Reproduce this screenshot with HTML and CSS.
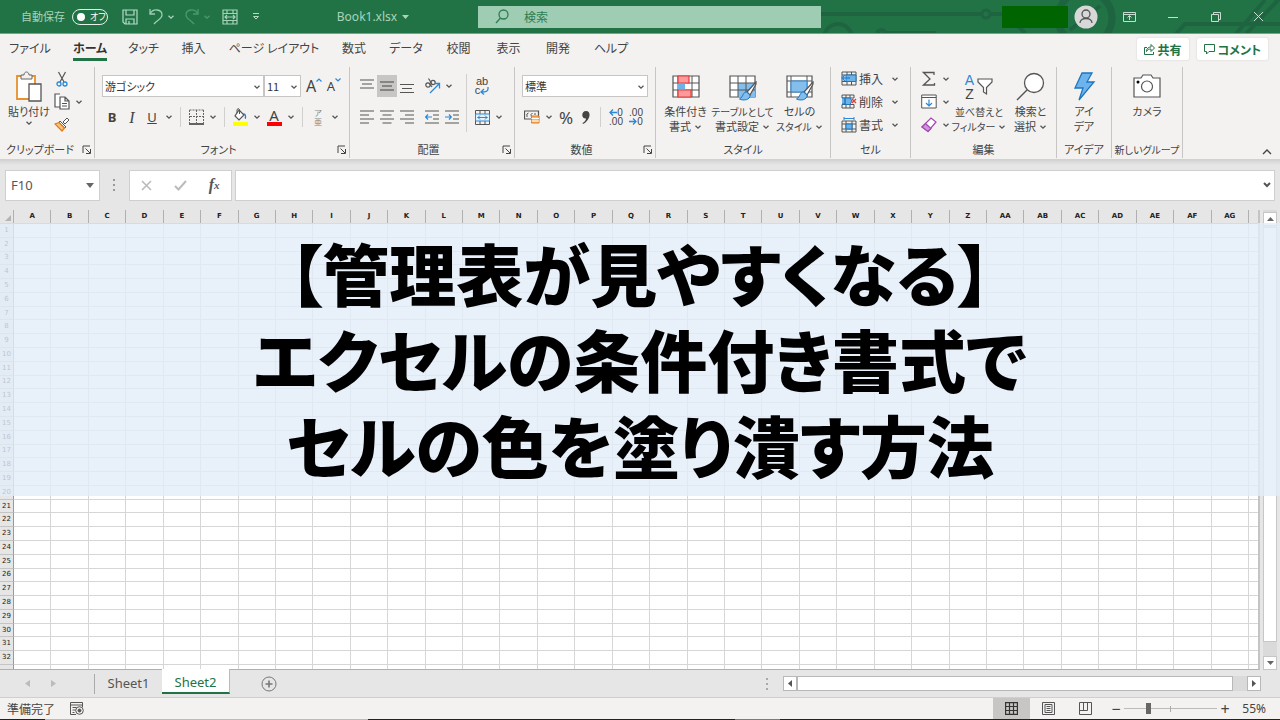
FILE: index.html
```html
<!DOCTYPE html>
<html lang="ja">
<head>
<meta charset="utf-8">
<title>Book1.xlsx</title>
<link rel="stylesheet" href="styles.css">
</head>
<body>
<svg class="defs" aria-hidden="true">
  <symbol id="cv" viewBox="0 0 8 8"><path d="M1.5 2.7 4 5.2 6.500 2.700" fill="none" stroke="currentColor" stroke-width="1.300"/></symbol>
  <symbol id="launch" viewBox="0 0 10 10"><path d="M1 8V1h7M3.500 3.500 8 8M8.500 4v4.500H4" fill="none" stroke="currentColor"/></symbol>
  <symbol id="brushpen" viewBox="0 0 18 20"><path d="M17 1 8 11l3 3 6-11z" fill="#fff" stroke="#555" stroke-width="1.200"/><path d="M7.500 11c-4 0-3 5-7 7 4 2 11 1 10.500-4z" fill="#83beec" stroke="#1e76bd"/></symbol>
</svg>
<div class="app">
  <header class="titlebar">
    <svg class="deco" viewBox="0 0 460 33" aria-hidden="true"><g fill="none" stroke="#1e6440" stroke-width="4"><path d="M0 14h162M171 14h20"/><circle cx="166" cy="14" r="4" stroke-width="3"/><circle cx="18" cy="38" r="14"/><path d="M57 33a5 5 0 0 1 9 0h50"/><circle cx="265" cy="18" r="27" stroke-width="7"/><path d="M205 33 192 20M250 30l30-24M355 35l10-11h95M415 35 445 0M425 35 460-2"/></g></svg>
    <label class="autosave">自動保存 <input type="checkbox" class="switch-input"><span class="switch">オフ</span></label>
    <div class="quick">
      <button class="q20" aria-label="上書き保存"><svg width="16" height="16" viewBox="0 0 16 16" fill="none" stroke="#b4dcc5" stroke-width="1.200"><path d="M1 1h14v14H3l-2-2zM4 1v5h8V1M4 15v-5h8v5M7 15v-3"/></svg></button>
      <button class="q26" aria-label="元に戻す"><svg width="14" height="17" viewBox="0 0 14 17" fill="none" stroke="#9ccdb1" stroke-width="1.300"><path d="M1 1v5h5M1 6C4 0 13 1 13 7c0 4-5 5-8 9"/></svg><svg class="cv"><use href="#cv"/></svg></button>
      <button class="q26 dim" aria-label="やり直し"><svg width="14" height="17" viewBox="0 0 14 17" fill="none" stroke="#4c9870" stroke-width="1.300"><path d="M13 1v5H8M13 6C10 0 1 1 1 7c0 4 5 5 8 9"/></svg><svg class="cv"><use href="#cv"/></svg></button>
      <button class="q20" aria-label="セルを結合して中央揃え"><svg width="16" height="16" viewBox="0 0 16 16" fill="none" stroke="#a5d3b8" stroke-width="1.200"><path d="M1 1h14v14H1zM1 4.500h14M1 11.500h14M5 1v3M11 1v3M5 12v3M11 12v3M3 8h10M5 6 3 8l2 2M11 6l2 2-2 2"/></svg></button>
      <button class="more" aria-label="カスタマイズ"><svg width="8" height="7" viewBox="0 0 8 7" fill="none" stroke="#b4dcc5"><path d="M1 .5h6M1.500 3.500h5L4 6z"/></svg></button>
    </div>
    <button class="docname">Book1.xlsx <svg width="7" height="4" viewBox="0 0 7 4"><path d="M0 0h7L3.500 4z" fill="#a9d3bb"/></svg></button>
    <label class="search"><svg width="14" height="15" viewBox="0 0 14 15" fill="none" stroke="#2d7d52" stroke-width="1.300"><circle cx="8.500" cy="5.500" r="4.500"/><path d="M5.500 9 1 14"/></svg><input type="search" placeholder="検索" aria-label="検索"></label>
    <div class="account"><span class="mask"></span>
      <svg width="24" height="24" viewBox="0 0 24 24"><circle cx="12" cy="12" r="11.500" fill="#d8d8d8"/><g fill="none" stroke="#555" stroke-width="1.300"><circle cx="12" cy="9" r="4"/><path d="M6 18c0-6 12-6 12 0"/></g></svg></div>
    <div class="winbtns">
      <button aria-label="リボンの表示オプション"><svg width="13" height="10" viewBox="0 0 13 10" fill="none" stroke="#c5dfd0"><path d="M.5.5h12v9H.5zM.5 2.500h12M6.500 8V4M4.500 5.500l2-2 2 2"/></svg></button>
      <button aria-label="最小化"><svg width="10" height="10" viewBox="0 0 10 10" stroke="#c5dfd0"><path d="M0 5.500h10"/></svg></button>
      <button aria-label="元のサイズに戻す"><svg width="10" height="10" viewBox="0 0 10 10" fill="none" stroke="#c5dfd0"><path d="M.5 2.500h7v7h-7zM2.500 2.500v-2h7v7h-2"/></svg></button>
      <button aria-label="閉じる"><svg width="11" height="11" viewBox="0 0 11 11" stroke="#c5dfd0"><path d="m1 1 9 9M10 1l-9 9"/></svg></button>
    </div>
  </header>

  <div class="tabrow">
    <nav class="tabs">
      <a href="#">ファイル</a><a href="#" class="active">ホーム</a><a href="#">タッチ</a><a href="#">挿入</a><a href="#">ページ レイアウト</a><a href="#">数式</a><a href="#">データ</a><a href="#">校閲</a><a href="#">表示</a><a href="#">開発</a><a href="#">ヘルプ</a>
    </nav>
    <div class="share">
      <button><svg width="11" height="12" viewBox="0 0 11 12" fill="none" stroke="#217346"><path d="M3 4.500H.5v7h9V9M2.500 8.500c0-3 2-4.500 4.500-4.500V1.500L10.500 5 7 8.500V6C5 6 3.500 6.500 2.500 8.500z"/></svg>共有</button>
      <button><svg width="11" height="11" viewBox="0 0 11 11" fill="none" stroke="#217346"><path d="M.5.500h10v7H5l-2.500 2.500V7.500h-2z"/></svg>コメント</button>
    </div>
  </div>

  <section class="ribbon">
    <div class="group g-clip">
      <div class="body">
        <button class="big paste"><svg width="28" height="32" viewBox="0 0 28 32" fill="none"><path d="M2 5h18v23H2z" fill="#fff" stroke="#e8912d" stroke-width="1.800"/><path d="M6 8V4h3c0-4 5-4 5 0h3v4z" fill="#f3f2f1" stroke="#666"/><path d="M14 13h12v17H14z" fill="#fff" stroke="#555" stroke-width="1.300"/></svg><span>貼り付け</span><svg class="cv"><use href="#cv"/></svg></button>
        <div class="stack">
          <button class="ic" aria-label="切り取り"><svg width="12" height="16" viewBox="0 0 12 16" fill="none"><path d="M2.500 1 8 11M9.500 1 4 11" stroke="#555" stroke-width="1.200"/><circle cx="3" cy="13" r="2" stroke="#2b88d8" stroke-width="1.300"/><circle cx="9" cy="13" r="2" stroke="#2b88d8" stroke-width="1.300"/></svg></button>
          <div class="row"><button class="ic" aria-label="コピー"><svg width="16" height="17" viewBox="0 0 16 17" fill="#fff" stroke="#555" stroke-width="1.200"><path d="M6 1H1v13h5M6 4h5l4 4v8H6zM11 4v4h4M8 10.500h5M8 13h5"/></svg></button><button class="cvb" aria-label="コピーのオプション"><svg class="cv"><use href="#cv"/></svg></button></div>
          <button class="ic" aria-label="書式のコピー"><svg width="16" height="15" viewBox="0 0 16 15"><path d="m9 5 4-4 2 2-4 4z" fill="#fff" stroke="#555"/><path d="m6 4 6 6-1.500 1L5 5.500z" fill="#fff" stroke="#555"/><path d="M5 5.500 1 7l7 7 2.500-3z" fill="#f7c37c" stroke="#e07b1a" stroke-width="1.200"/></svg></button>
        </div>
      </div>
      <div class="caption"><span>クリップボード</span><button aria-label="詳細"><svg width="10" height="10"><use href="#launch"/></svg></button></div>
    </div>

    <div class="group g-font">
      <div class="rows">
        <div class="row">
          <label class="combo font-name"><select aria-label="フォント"><option>游ゴシック</option></select><svg class="cv"><use href="#cv"/></svg></label>
          <label class="combo font-size"><select aria-label="フォント サイズ"><option>11</option></select><svg class="cv"><use href="#cv"/></svg></label>
          <button class="ic lat a-big" aria-label="拡大">A<svg width="6" height="4" viewBox="0 0 6 4"><path d="M.5 3.500 3 1l2.500 2.500" fill="none" stroke="#2b88d8" stroke-width="1.200"/></svg></button>
          <button class="ic lat" aria-label="縮小">A<svg width="6" height="4" viewBox="0 0 6 4"><path d="M.5.500 3 3 5.500.500" fill="none" stroke="#2b88d8" stroke-width="1.200"/></svg></button>
        </div>
        <div class="row">
          <button class="ic lat"><b>B</b></button><button class="ic serif"><i>I</i></button><button class="ic lat"><u>U</u></button><button class="cvb" aria-label="下線"><svg class="cv"><use href="#cv"/></svg></button><span class="sep"></span>
          <button class="ic" aria-label="罫線"><svg width="15" height="16" viewBox="0 0 15 16" fill="none" stroke="#666"><path d="M.5 1h14M.5 1v13M14.500 1v13M7.500 1v13M1 7.500h13" stroke-dasharray="2 1"/><path d="M0 15h15" stroke="#333" stroke-width="1.500"/></svg></button><button class="cvb" aria-label="罫線の種類"><svg class="cv"><use href="#cv"/></svg></button><span class="sep"></span>
          <button class="ic" aria-label="塗りつぶし"><svg width="16" height="18" viewBox="0 0 16 18"><path d="m7 2 5 5-5 5-4-4z" fill="#fff" stroke="#555" stroke-width="1.200"/><path d="M5 5V1.500q1.500-2 2.500 0V6" fill="none" stroke="#555"/><path d="M11 5q4 0 3 6-2 0-1-3z" fill="#2b7cc4"/><path d="M1 14h15v4H1z" fill="#ff0"/></svg></button><button class="cvb" aria-label="塗りつぶしの色"><svg class="cv"><use href="#cv"/></svg></button>
          <button class="ic fontcolor lat" aria-label="フォントの色">A</button><button class="cvb" aria-label="フォントの色の選択"><svg class="cv"><use href="#cv"/></svg></button><span class="sep"></span>
          <button class="ic ruby"><span>ア</span><span>亜</span></button><button class="cvb" aria-label="ふりがな"><svg class="cv"><use href="#cv"/></svg></button>
        </div>
      </div>
      <div class="caption"><span>フォント</span><button aria-label="詳細"><svg width="10" height="10"><use href="#launch"/></svg></button></div>
    </div>

    <div class="group g-align">
      <div class="body">
        <div class="rows">
          <div class="row">
            <button class="ic" aria-label="上揃え"><svg width="14" height="16" viewBox="0 0 14 16" stroke="#555" stroke-width="1.200"><path d="M0 2h14M2 6h10M0 10h14"/></svg></button>
            <button class="ic on" aria-label="上下中央揃え"><svg width="14" height="16" viewBox="0 0 14 16" stroke="#444" stroke-width="1.200"><path d="M0 4h14M2 8h10M0 12h14"/></svg></button>
            <button class="ic" aria-label="下揃え"><svg width="14" height="16" viewBox="0 0 14 16" stroke="#555" stroke-width="1.200"><path d="M0 6.500h14M2 10.500h10M0 14.500h14"/></svg></button>
            <span class="gap"></span>
            <button class="ic" aria-label="方向"><svg width="17" height="17" viewBox="0 0 17 17" fill="none"><g stroke="#555" stroke-width="1.200"><circle cx="4" cy="7" r="2.200"/><path d="m5 5 3 4"/><circle cx="9" cy="4.500" r="2.200"/><path d="M4.500.500 8 6"/></g><path d="M6 15 15 6M10.500 5.500h5v5" stroke="#2b88d8" stroke-width="1.300"/></svg></button><button class="cvb" aria-label="方向の選択"><svg class="cv"><use href="#cv"/></svg></button>
          </div>
          <div class="row">
            <button class="ic" aria-label="左揃え"><svg width="14" height="14" viewBox="0 0 14 14" stroke="#555" stroke-width="1.200"><path d="M0 1h14M0 5h9M0 9h14M0 13h9"/></svg></button>
            <button class="ic" aria-label="中央揃え"><svg width="14" height="14" viewBox="0 0 14 14" stroke="#555" stroke-width="1.200"><path d="M0 1h14M2.500 5h9M0 9h14M2.500 13h9"/></svg></button>
            <button class="ic" aria-label="右揃え"><svg width="14" height="14" viewBox="0 0 14 14" stroke="#555" stroke-width="1.200"><path d="M0 1h14M5 5h9M0 9h14M5 13h9"/></svg></button>
            <span class="gap"></span>
            <button class="ic" aria-label="インデントを減らす"><svg width="14" height="14" viewBox="0 0 14 14" fill="none" stroke="#555" stroke-width="1.200"><path d="M0 1h14M8 5h6M8 9h6M0 13h14"/><path d="M7 7H1M3 4.500.700 7 3 9.500" stroke="#2b88d8"/></svg></button>
            <button class="ic" aria-label="インデントを増やす"><svg width="14" height="14" viewBox="0 0 14 14" fill="none" stroke="#555" stroke-width="1.200"><path d="M0 1h14M8 5h6M8 9h6M0 13h14"/><path d="M0 7h6M4 4.500 6.300 7 4 9.500" stroke="#2b88d8"/></svg></button>
          </div>
        </div>
        <span class="sep tall"></span>
        <div class="rows">
          <div class="row"><button class="ic wrap" aria-label="折り返して全体を表示する"><span>ab</span><span>c<svg width="9" height="8" viewBox="0 0 9 8" fill="none" stroke="#2b88d8" stroke-width="1.300"><path d="M8 0v2q0 3-6 3M4 2 1 5l3 2.500"/></svg></span></button></div>
          <div class="row"><button class="ic" aria-label="セルを結合"><svg width="15" height="15" viewBox="0 0 15 15" fill="none" stroke="#555"><path d="M.5.500h14v14H.5zM5 .5V4M10 .5V4M5 11v3.500M10 11v3.500"/><path d="M.5 4h14v7H.5z" fill="#e6f2fb" stroke="#2b88d8"/><path d="M2.500 7.500h10M5 5.500l-2 2 2 2M10 5.500l2 2-2 2" stroke="#2b88d8"/></svg></button><button class="cvb" aria-label="結合の選択"><svg class="cv"><use href="#cv"/></svg></button></div>
        </div>
      </div>
      <div class="caption"><span>配置</span><button aria-label="詳細"><svg width="10" height="10"><use href="#launch"/></svg></button></div>
    </div>

    <div class="group g-num">
      <div class="rows">
        <div class="row"><label class="combo num-format"><select aria-label="表示形式"><option>標準</option></select><svg class="cv"><use href="#cv"/></svg></label></div>
        <div class="row">
          <button class="ic" aria-label="通貨表示形式"><svg width="16" height="14" viewBox="0 0 16 14" fill="none"><path d="M.5 1h14v8H.5z" stroke="#555" stroke-width="1.200"/><path d="M4.500 3Q2 3 3 7M8.500 3Q6 4 7.500 7M11 3v2" stroke="#555"/><path d="M7.500 6h7.500v7H7.500z" fill="#f9b66b" stroke="#e07b1a"/><path d="M7.500 8.500H15M7.500 11H15" stroke="#fff"/></svg></button><button class="cvb" aria-label="通貨の選択"><svg class="cv"><use href="#cv"/></svg></button>
          <button class="ic lat pct">%</button>
          <button class="ic" aria-label="桁区切り"><svg width="8" height="13" viewBox="0 0 8 13"><path d="M4 0c6 0 4 10-3 13l-.5-1C3 10.500 4 9 4 7.500-1 8-1 0 4 0z" fill="#444"/></svg></button><span class="sep"></span>
          <button class="ic dec" aria-label="小数点以下の表示桁数を増やす"><span><svg width="8" height="7" viewBox="0 0 8 7" fill="none" stroke="#2b88d8" stroke-width="1.300"><path d="M8 3.500H1M4 .5l-3 3 3 3"/></svg>0</span><span>.00</span></button>
          <button class="ic dec" aria-label="小数点以下の表示桁数を減らす"><span>.00</span><span><svg width="8" height="7" viewBox="0 0 8 7" fill="none" stroke="#2b88d8" stroke-width="1.300"><path d="M0 3.500h7M4 .5l3 3-3 3"/></svg>0</span></button>
        </div>
      </div>
      <div class="caption"><span>数値</span><button aria-label="詳細"><svg width="10" height="10"><use href="#launch"/></svg></button></div>
    </div>

    <div class="group g-style">
      <div class="body">
        <button class="big"><svg width="30" height="28" viewBox="0 0 30 28"><path d="M2 3h26v21H2z" fill="#fff" stroke="#555" stroke-width="1.200"/><path d="M2 10h26M2 17h26M7 3v21M21 3v21" stroke="#555"/><path d="M7 3h11v7H7zM7 17h13v7H7z" fill="#ff9a9a" stroke="#e03c3c" stroke-width="1.200"/><path d="M7 10.500h7v6H7z" fill="#6db3e8"/></svg><span>条件付き</span><span>書式 <svg class="cv"><use href="#cv"/></svg></span></button>
        <button class="big"><svg width="30" height="28" viewBox="0 0 30 28"><path d="M2 3h25v21H2z" fill="#fff" stroke="#555" stroke-width="1.200"/><path d="M10 10h17v14H10z" fill="#83beec"/><path d="M2 10h25M2 17h25M10 3v21M18 3v21" stroke="#555"/><use href="#brushpen" x="11" y="8" width="18" height="20"/></svg><span class="compact">テーブルとして</span><span>書式設定 <svg class="cv"><use href="#cv"/></svg></span></button>
        <button class="big"><svg width="30" height="28" viewBox="0 0 30 28"><path d="M2 3h25v21H2z" fill="#fff" stroke="#555" stroke-width="1.200"/><path d="M2 8h25M2 19h25M6 3v21M22 3v21" stroke="#555"/><path d="M6 8h16v11H6z" fill="#83beec" stroke="#2b88d8"/><use href="#brushpen" x="11" y="8" width="18" height="20"/></svg><span>セルの</span><span class="compact">スタイル <svg class="cv"><use href="#cv"/></svg></span></button>
      </div>
      <div class="caption"><span>スタイル</span></div>
    </div>

    <div class="group g-cell">
      <div class="stack">
        <button class="line"><svg width="16" height="15" viewBox="0 0 16 15" fill="none" stroke="#555"><path d="M1 1h14v13H1zM1 4h14M1 10.500h14M6 1v13M10.500 1v13"/><path d="M5 4h10v6.500H5z" fill="#6db3e8" stroke="#1e76bd"/><path d="M9 7H1M4 4 1 7l3 3" stroke="#2b88d8" stroke-width="1.300"/></svg><span>挿入</span><svg class="cv"><use href="#cv"/></svg></button>
        <button class="line"><svg width="16" height="15" viewBox="0 0 16 15" fill="none" stroke="#555"><path d="M1 1h12v3H1zM1 10.500h12V14H1zM5 1v3M9 1v3M5 11v3M9 11v3"/><path d="M1 4h3v6H1M4 4h5l2 3-2 3.500H4z" fill="#6db3e8" stroke="#1e76bd"/><path d="m11 5 4 4M15 5l-4 4" stroke="#e03c3c" stroke-width="1.300"/></svg><span>削除</span><svg class="cv"><use href="#cv"/></svg></button>
        <button class="line"><svg width="16" height="16" viewBox="0 0 16 16" fill="none" stroke="#555"><path d="M1 4h14v11H1zM1 7h14M1 12h14M5 4v11M11 4v11"/><path d="M5 7h6v5H5z" fill="#6db3e8" stroke="#1e76bd"/><path d="M3 1.500h10M3 0v3M13 0v3" stroke="#2b88d8"/></svg><span>書式</span><svg class="cv"><use href="#cv"/></svg></button>
      </div>
      <div class="caption"><span>セル</span></div>
    </div>

    <div class="group g-edit">
      <div class="body">
        <div class="stack">
          <div class="row"><button class="ic" aria-label="合計"><svg width="14" height="16" viewBox="0 0 14 16" fill="none" stroke="#555" stroke-width="1.300"><path d="M12 4V1.500H1.500L8 8l-6.500 6H12.500V12"/></svg></button><button class="cvb" aria-label="集計の選択"><svg class="cv"><use href="#cv"/></svg></button></div>
          <div class="row"><button class="ic" aria-label="フィル"><svg width="16" height="15" viewBox="0 0 16 15" fill="none" stroke="#555"><path d="M.7 1h14.500v13H.7zM.7 3.500h14.500" fill="#fff"/><path d="M8 5.500v6.500M5 9l3 3 3-3" stroke="#2b88d8" stroke-width="1.200"/></svg></button><button class="cvb" aria-label="フィルの選択"><svg class="cv"><use href="#cv"/></svg></button></div>
          <div class="row"><button class="ic" aria-label="クリア"><svg width="16" height="16" viewBox="0 0 16 16" fill="#fff" stroke="#a346b4" stroke-width="1.200"><path d="m10 1 5 4-8 9.500-6-4.500z"/><path d="m4.500 6.500 5.500 5-3 3L1 10z" fill="#cf93d9"/></svg></button><button class="cvb" aria-label="クリアの選択"><svg class="cv"><use href="#cv"/></svg></button></div>
        </div>
        <button class="big"><span class="az"><span class="azt"><em>A</em><em>Z</em></span><svg width="16" height="18" viewBox="0 0 16 18"><path d="M1 1h14v3L9.500 9.500V16l-3-2V9.500L1 4z" fill="#fff" stroke="#555" stroke-width="1.200"/></svg></span><span class="compact">並べ替えと</span><span class="compact">フィルター <svg class="cv"><use href="#cv"/></svg></span></button>
        <button class="big"><svg width="30" height="32" viewBox="0 0 30 32"><circle cx="18" cy="12" r="9.500" fill="#fff" stroke="#555" stroke-width="1.300"/><path d="M11 19 1 29" stroke="#555" stroke-width="1.400"/></svg><span>検索と</span><span>選択 <svg class="cv"><use href="#cv"/></svg></span></button>
      </div>
      <div class="caption"><span>編集</span></div>
    </div>

    <div class="group g-idea">
      <div class="body"><button class="big"><svg width="24" height="30" viewBox="0 0 24 30"><path d="M10 1h10l-5 9h7L7 28l4-12H3z" fill="#6db3ec" stroke="#1e76bd" stroke-width="1.300"/></svg><span>アイ</span><span>デア</span></button></div>
      <div class="caption"><span>アイデア</span></div>
    </div>
    <div class="group g-new">
      <div class="body"><button class="big"><svg width="28" height="28" viewBox="0 0 28 28"><path d="M1 5h7l2-3h8l2 3h7v19H1z" fill="#fff" stroke="#555" stroke-width="1.200"/><circle cx="14" cy="13.500" r="5.500" fill="#fff" stroke="#555" stroke-width="1.200"/><circle cx="5" cy="9" r="1.500"/></svg><span>カメラ</span></button></div>
      <div class="caption"><span class="compact">新しいグループ</span></div>
    </div>
    <button class="collapse" aria-label="リボンを折りたたむ"><svg width="10" height="6" viewBox="0 0 10 6"><path d="m1 5 4-4 4 4" fill="none" stroke="#444" stroke-width="1.400"/></svg></button>
  </section>

  <div class="formulabar">
    <label class="namebox"><input type="text" value="F10" aria-label="名前ボックス"><svg width="8" height="5" viewBox="0 0 8 5"><path d="M0 0h8L4 5z" fill="#666"/></svg></label>
    <svg class="grip" width="3" height="12" viewBox="0 0 3 12" fill="#999"><path d="M0 0h2v2H0zM0 5h2v2H0zM0 10h2v2H0z"/></svg>
    <div class="fxbtns">
      <button aria-label="キャンセル"><svg width="11" height="11" viewBox="0 0 11 11" stroke="#bbb" stroke-width="1.600"><path d="m1 1 9 9M10 1l-9 9"/></svg></button>
      <button aria-label="入力"><svg width="13" height="11" viewBox="0 0 13 11" fill="none" stroke="#bbb" stroke-width="2"><path d="m1 6 3.500 3.500L12 1"/></svg></button>
      <button class="fx"><i>f</i><sub>x</sub></button>
    </div>
    <label class="formula"><input type="text" aria-label="数式バー"><svg width="8" height="6" viewBox="0 0 8 6"><path d="m1 1 3 3 3-3" fill="none" stroke="#555" stroke-width="2"/></svg></label>
  </div>

  <main class="sheet">
    <table class="grid"><thead><tr id="head"></tr></thead><tbody id="rows"></tbody></table>
    <div class="vscroll">
      <button aria-label="上へ"><svg width="7" height="4" viewBox="0 0 7 4"><path d="M0 4h7L3.500 0z" fill="#666"/></svg></button>
      <div class="vthumb"></div><div class="vrest"></div>
      <button aria-label="下へ"><svg width="7" height="4" viewBox="0 0 7 4"><path d="M0 0h7L3.500 4z" fill="#666"/></svg></button>
    </div>
    <h1 class="headline"><span>【管理表が見やすくなる】</span><span>エクセルの条件付き書式で</span><span>セルの色を塗り潰す方法</span></h1>
  </main>

  <div class="sheettabs">
    <button class="arrow" aria-label="前のシート"><svg width="5" height="7" viewBox="0 0 5 7"><path d="M5 0v7L0 3.500z" fill="#bbb"/></svg></button>
    <button class="arrow" aria-label="次のシート"><svg width="5" height="7" viewBox="0 0 5 7"><path d="M0 0v7l5-3.500z" fill="#bbb"/></svg></button>
    <button class="stab">Sheet1</button><button class="stab current">Sheet2</button>
    <button class="add" aria-label="新しいシート"><svg width="16" height="16" viewBox="0 0 16 16" fill="none" stroke="#777"><circle cx="8" cy="8" r="7"/><path d="M8 4.500v7M4.500 8h7" stroke-width="1.600"/></svg></button>
    <svg class="tabgrip" width="3" height="12" viewBox="0 0 3 12" fill="#aaa"><path d="M0 0h2v2H0zM0 5h2v2H0zM0 10h2v2H0z"/></svg>
    <div class="hscroll">
      <button aria-label="左へ"><svg width="4" height="7" viewBox="0 0 4 7"><path d="M4 0v7L0 3.500z" fill="#555"/></svg></button>
      <div class="hthumb"></div><div class="hrest"></div>
      <button aria-label="右へ"><svg width="4" height="7" viewBox="0 0 4 7"><path d="M0 0v7l4-3.500z" fill="#555"/></svg></button>
    </div>
  </div>

  <footer class="status">
    <span>準備完了</span>
    <button class="macro" aria-label="マクロの記録"><svg width="14" height="13" viewBox="0 0 14 13" fill="none" stroke="#555"><path d="M6 12.500H.5V.500h12V5M.5 3h12M2.500 5.500h4M2.500 8h3M2.500 10.500h2"/><circle cx="9.500" cy="8.500" r="3.800"/><circle cx="9.500" cy="8.500" r="1.500" fill="#555"/></svg></button>
    <div class="views">
      <button class="on" aria-label="標準"><svg width="13" height="13" viewBox="0 0 13 13" fill="none" stroke="#333" stroke-width="1.200"><path d="M.6.600h11.800v11.800H.6zM.6 4.500h12M.6 8.500h12M4.500.600v12M8.500.600v12"/></svg></button>
      <button aria-label="ページ レイアウト"><svg width="13" height="13" viewBox="0 0 13 13" fill="none" stroke="#555"><path d="M.5.500h12v12H.5zM3 2.500h7v8H3zM4.500 4.500h4M4.500 6.500h4M4.500 8.500h4"/></svg></button>
      <button aria-label="改ページ プレビュー"><svg width="13" height="13" viewBox="0 0 13 13" fill="none" stroke="#555"><path d="M.5.500h12v12H.5zM.5 8.500h8v-8M4.500.500v8"/></svg></button>
    </div>
    <button class="zb">−</button><input class="zoom" type="range" min="0" max="100" value="25" aria-label="ズーム"><button class="zb">+</button>
    <span class="pct-label">55%</span>
  </footer>
  <div class="taskline"></div>
</div>
<script src="script.js"></script>
</body>
</html>
```
FILE: styles.css
```css
* { box-sizing: border-box; }
body { margin: 0; font-family: "Noto Sans CJK JP", sans-serif; font-feature-settings: "palt"; font-size: 12px; line-height: 15px; color: #444; }
button, input, select { font: inherit; font-feature-settings: inherit; color: inherit; border: 0; background: none; padding: 0; margin: 0; outline: 0; }
button { display: flex; align-items: center; justify-content: center; white-space: nowrap; }
svg { flex: none; display: block; }
.defs { position: absolute; width: 0; height: 0; }
.cv { width: 8px; height: 8px; color: #555; }
.app { min-height: 100vh; display: flex; flex-direction: column; background: #e6e6e6; }

.titlebar { position: relative; display: flex; align-items: center; height: 34px; background: #217346; border-bottom: 1px solid #6fa687; color: #a9d3bb; padding-left: 21px; overflow: hidden; }
.titlebar > * { position: relative; }
.titlebar .deco { position: absolute; right: 0; top: 0; width: 460px; height: 33px; }
.titlebar .cv { color: #a9d3bb; }
.autosave { display: flex; align-items: center; gap: 7px; font-size: 11px; width: 98px; }
.switch-input { position: absolute; opacity: 0; }
.switch { display: flex; align-items: center; gap: 5px; width: 36px; height: 16px; border: 1px solid #e4f2ea; border-radius: 8px; padding-left: 4px; color: #fff; font-size: 9px; }
.switch::before { content: ""; width: 8px; height: 8px; border-radius: 50%; background: #fff; }
.quick { display: flex; width: 216px; gap: 6px; }
.q20 { width: 22px; }
.q26 { width: 30px; gap: 4px; }
.more { width: 18px; }
.titlebar .dim .cv { color: #4c9870; }
.docname { width: 76px; gap: 5px; font-family: "Noto Sans", sans-serif; }
.search { display: flex; align-items: center; gap: 15px; width: 343px; height: 22px; margin-left: 67px; padding-left: 17px; background: #9fcdb4; }
.search input { flex: 1; font-size: 12px; color: #2d7d52; }
.search input::placeholder { color: #2d7d52; opacity: 1; }
.account { display: flex; align-items: center; gap: 6px; margin-left: auto; }
.mask { width: 66px; height: 22px; background: #006400; }
.winbtns { display: flex; margin-left: 10px; }
.winbtns button { width: 43px; }

.tabrow { display: flex; justify-content: space-between; height: 32px; background: #f3f2f1; padding-right: 12px; }
.tabs { display: grid; grid-template-columns: 60px 60px 47px 53px 108px 52px 52px 53px 47px 52px 54px; }
.tabs a { display: flex; align-items: center; justify-self: center; color: #444; text-decoration: none; white-space: nowrap; border-bottom: 3px solid transparent; height: 27px; padding-top: 3px; }
.tabs .active { font-weight: bold; color: #333; border-color: #217346; }
.share { display: flex; gap: 8px; padding-top: 4px; }
.share button { height: 22px; padding: 0 7px; gap: 3px; background: #fff; color: #217346; font-weight: bold; border-radius: 2px; box-shadow: 0 0 2px #ccc; }

.ribbon { display: flex; height: 93px; background: #f3f2f1; position: relative; padding-top: 1px; }
.group { display: flex; flex-direction: column; justify-content: space-between; border-right: 1px solid #c8c6c4; height: 91px; }
.body { display: flex; }
.rows { display: flex; flex-direction: column; gap: 5px; padding-top: 6px; }
.row { display: flex; align-items: center; height: 26px; }
.stack { display: flex; flex-direction: column; }
.stack .row, .stack > .ic { height: 23px; }
.ic { width: 20px; height: 22px; }
.cvb { width: 14px; height: 22px; }
.sep { width: 1px; height: 20px; margin: 0 5px 0 4px; background: #d2d0ce; }
.sep.tall { height: 58px; margin-top: 7px; }
.gap { width: 5px; }
.on { background: #c8c6c4; }
.caption { display: flex; align-items: center; height: 17px; white-space: nowrap; font-size: 11px; }
.caption span { flex: 1; text-align: center; }
.caption button { width: 14px; height: 14px; }
.big { flex-direction: column; justify-content: flex-start; padding-top: 3px; font-size: 11px; line-height: 15px; }
.big > svg:first-child, .big > .az { height: 34px; }
.big > span { display: flex; align-items: center; gap: 3px; }
.big > .compact, .caption .compact { font-size: 10px; }
.g-clip { width: 95px; }
.paste { width: 58px; }
.g-clip .stack { margin-left: -6px; }
.g-font { width: 255px; padding-left: 7px; }
.g-align { width: 165px; padding-left: 7px; }
.g-num { width: 141px; padding-left: 7px; }
.g-style { width: 175px; }
.g-style .big { width: 57px; }
.g-style .body { padding-left: 1px; }
.g-cell { width: 80px; }
.g-cell .stack { padding-left: 10px; }
.g-edit { width: 146px; }
.g-edit .stack { padding-left: 8px; }
.g-edit .big { width: 52px; }
.g-idea { width: 55px; }
.g-new { width: 71px; }
.g-idea .big, .g-new .big { flex: 1; }
.line { height: 23px; gap: 2px; font-size: 12px; justify-content: flex-start; }
.line .cv { margin-left: 6px; }
.combo { display: flex; position: relative; height: 22px; background: #fff; border: 1px solid #c8c6c4; }
.combo select { flex: 1; appearance: none; padding-left: 2px; font-size: 11px; color: #333; }
.combo .cv { position: absolute; right: 2px; top: 7px; }
.font-name { width: 162px; }
.font-size { width: 37px; }
.font-size + .ic { margin-left: 3px; }
.num-format { width: 126px; }
.lat { font-family: "Noto Sans", sans-serif; font-size: 13px; }
.lat svg { align-self: flex-start; margin-top: 3px; }
.a-big { font-size: 16px; }
.serif { font-family: "Liberation Serif", serif; font-size: 16px; }
.fontcolor { position: relative; line-height: 16px; font-size: 15px; padding-bottom: 5px; }
.fontcolor::after { content: ""; position: absolute; left: 3px; right: 2px; bottom: 2px; height: 4px; background: #f00; }
.ruby { flex-direction: column; font-size: 8px; line-height: 9px; color: #888; }
.wrap, .dec { flex-direction: column; font-family: "Liberation Sans", sans-serif; font-size: 10px; line-height: 9px; }
.wrap { font-size: 11px; }
.wrap span, .dec span { display: flex; align-items: center; }
.pct { font-size: 17px; }
.az { gap: 2px; }
.azt { display: flex; flex-direction: column; font-family: "Liberation Sans", sans-serif; font-size: 14px; line-height: 14px; }
.azt em { font-style: normal; }
.azt em:first-child { color: #2b88d8; }
.collapse { margin: auto 7px 2px auto; width: 12px; height: 10px; }

.formulabar { display: flex; align-items: center; height: 51px; padding: 1px 5px 0; background: linear-gradient(#cfcfcf, #e6e6e6 6px); }
.namebox, .fxbtns, .formula { display: flex; align-items: center; height: 31px; background: #fff; border: 1px solid #cfcfcf; }
.namebox { width: 95px; padding: 0 5px; }
.namebox input { flex: 1; min-width: 0; font-family: "Noto Sans", sans-serif; font-size: 13px; color: #555; }
.grip { margin: 0 13px; }
.fxbtns { width: 103px; margin-right: 3px; }
.fxbtns button { flex: 1; }
.fx { font: bold 16px "Liberation Serif", serif; color: #555; }
.fx sub { font-size: 11px; font-style: italic; }
.formula { flex: 1; padding-right: 3px; }
.formula input { flex: 1; }

.sheet { position: relative; flex: 1; display: flex; gap: 3px; padding-right: 3px; }
.grid { flex: 1; width: 100%; table-layout: fixed; border-collapse: separate; border-spacing: 0; background: #fff; border-right: 2px solid #c4c4c4; border-bottom: 1px solid #b0b0b0; }
.grid th, .grid td { padding: 0; border-right: 1px solid #d6d6d6; border-bottom: 1px solid #d6d6d6; }
.grid th { background: #e6e6e6; color: #222; font: 8px/9px "DejaVu Sans", sans-serif; border-color: #b0b0b0; text-align: center; }
.grid thead th { height: 14px; border-bottom-color: #999; }
.grid thead th:not(:first-child) { font-weight: bold; font-size: 7px; }
.grid tbody th { font-size: 7px; border-bottom-color: #c4c4c4; border-right-color: #999; }
.grid .corner { width: 14px; }
.grid .corner svg { margin: 2px 2px 0 auto; }
.grid .tail { width: 9px; border-right: 0; }
.grid .stub { height: 4px; }
.grid .stub td, .grid .stub th { border-bottom: 0; }
.vscroll { flex: none; display: flex; flex-direction: column; width: 14px; padding-top: 2px; background: #dadada; }
.vscroll button, .vthumb { background: #fff; border: 1px solid #c6c6c6; }
.vscroll button { height: 14px; }
.vthumb { flex: 1; margin-top: 1px; }
.vrest { height: 14px; }
.headline { position: absolute; left: 0; right: 0; top: 13px; margin: 0; padding: 6px 0 9px; background: rgba(226, 236, 249, .8); color: #000; font-size: 67px; line-height: 86px; font-weight: 900; text-align: center; }
.headline span { display: block; white-space: nowrap; }

.sheettabs { display: flex; align-items: center; height: 28px; border-bottom: 1px solid #cfcfcf; padding-left: 14px; padding-right: 19px; }
.arrow { width: 26px; }
.stab { height: 20px; width: 68px; font-family: "Noto Sans", sans-serif; font-size: 13px; color: #555; }
.arrow + .stab { margin-left: 28px; border-left: 1px solid #aaa; }
.stab.current { align-self: flex-start; height: 25px; padding-top: 4px; background: #fff; color: #217346; border-bottom: 2px solid #217346; margin-top: -1px; position: relative; border-right: 1px solid #bbb; }
.add { margin-left: 31px; }
.tabgrip { margin-left: auto; margin-right: 14px; }
.hscroll { display: flex; width: 478px; height: 15px; background: #dadada; }
.hscroll button, .hthumb { background: #fff; border: 1px solid #b8b8b8; }
.hscroll button { width: 14px; }
.hthumb { flex: 1; }
.hrest { width: 14px; }

.status { display: flex; align-items: center; height: 21px; background: #f3f2f1; padding: 0 14px 0 7px; }
.macro { margin-left: 15px; }
.views { display: flex; align-self: stretch; margin-left: auto; margin-right: 4px; }
.views button { width: 37px; }
.zb { width: 16px; font: 16px "Noto Sans", sans-serif; line-height: 16px; }
.zoom { appearance: none; width: 93px; height: 12px; background: linear-gradient(#aaa, #aaa) center / 1px 6px no-repeat, linear-gradient(#bbb, #bbb) center / 100% 1px no-repeat; }
.zoom::-webkit-slider-thumb { appearance: none; width: 5px; height: 11px; background: #666; border-radius: 0; }
.pct-label { width: 33px; text-align: right; font-family: "Noto Sans", sans-serif; }
.taskline { height: 1px; background: linear-gradient(90deg, #222 45px, #bbb 45px 368px, #222 368px 735px, #a5733c 735px 780px, #222 780px); }
```
FILE: script.js
```js
const head = document.getElementById('head');
const rows = document.getElementById('rows');
const letters = 'ABCDEFGHIJKLMNOPQRSTUVWXYZ';
const columns = [...letters, ...[...'ABCDEFG'].map(c => 'A' + c)];

head.innerHTML = '<th class="corner"><svg width="6" height="6" viewBox="0 0 6 6"><path d="M6 0v6H0z" fill="#b4b4b4"/></svg></th>'
  + columns.map(c => `<th scope="col">${c}</th>`).join('') + '<th class="tail"></th>';

const cells = columns.map(() => '<td></td>').join('') + '<td class="tail"></td>';
let html = '';
for (let n = 1; n <= 32; n++) html += `<tr><th scope="row">${n}</th>${cells}</tr>`;
rows.innerHTML = html + `<tr class="stub"><th></th>${cells}</tr>`;
```
